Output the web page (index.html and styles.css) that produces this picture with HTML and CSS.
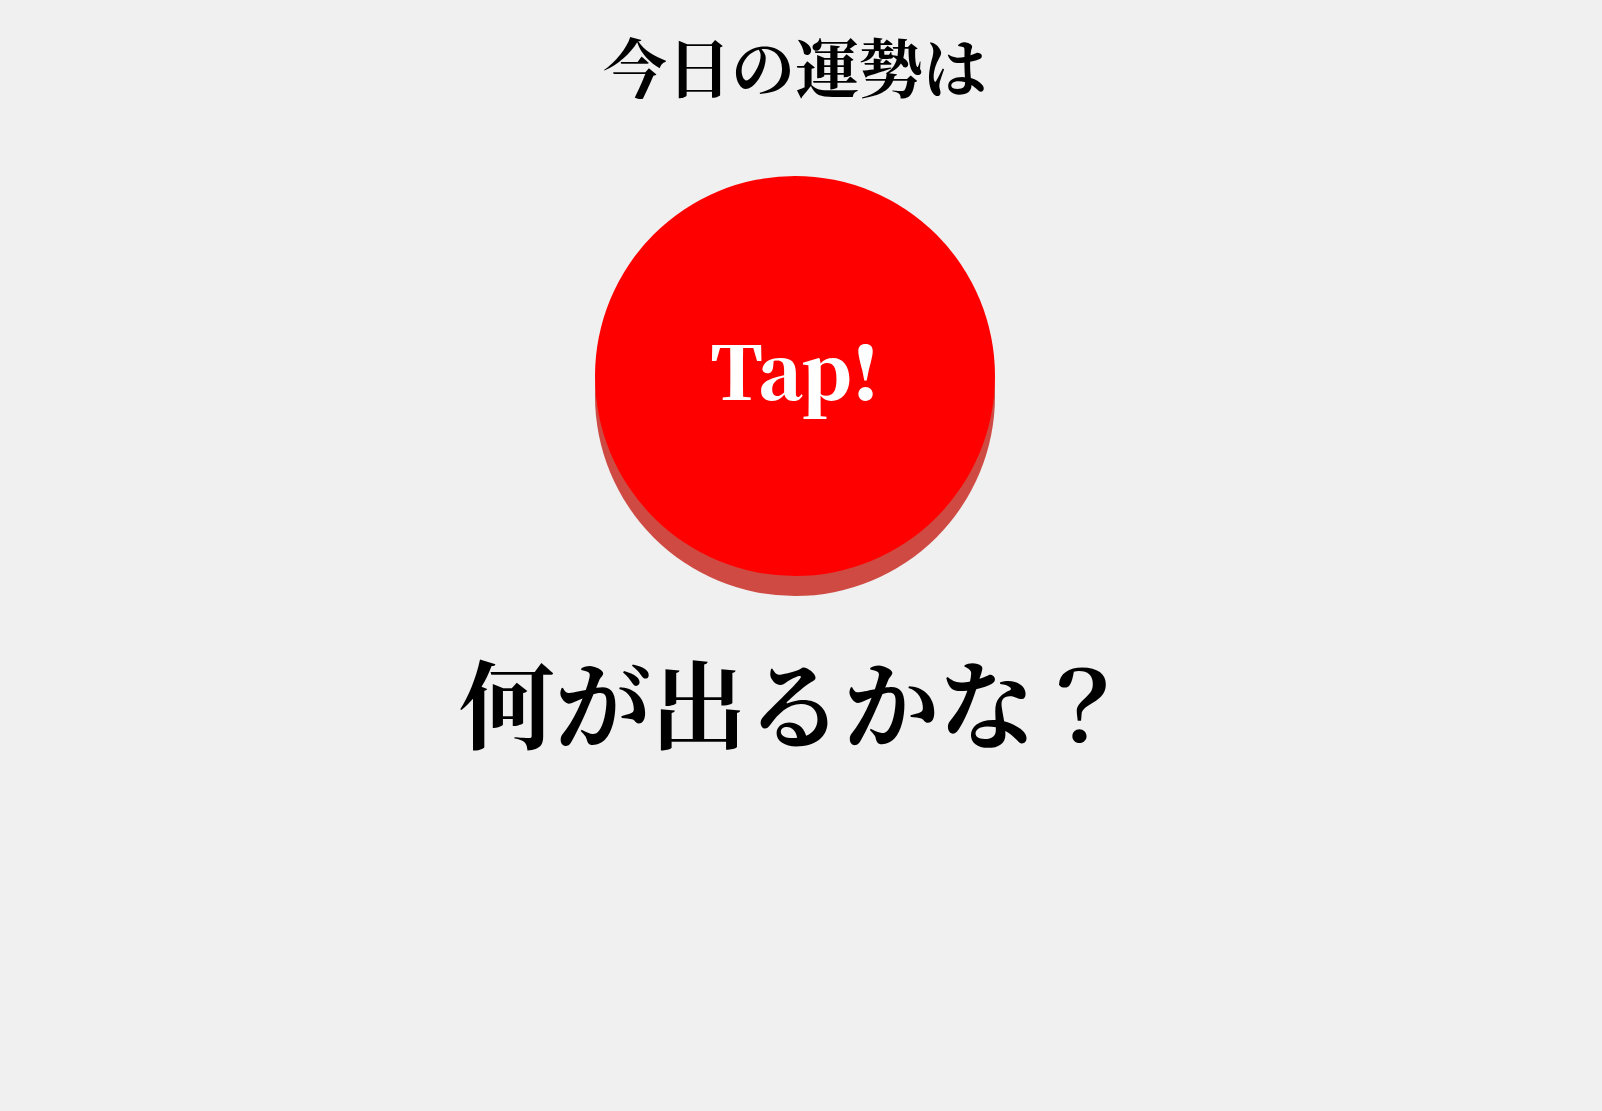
FILE: index.html
```html
<!DOCTYPE html>
<html lang="ja">
<head>
<meta charset="utf-8">
<link rel="stylesheet" href="styles.css">
</head>
<body>
<div class="page">
  <h1 class="title">今日の運勢は</h1>
  <div class="button"><span class="label">Tap!</span></div>
  <p class="result">何が出るかな？</p>
</div>
</body>
</html>
```
FILE: styles.css
```css
html, body {
  margin: 0;
  padding: 0;
  background: #f0f0f0;
}
body {
  font-family: "Noto Serif CJK JP", "Noto Serif JP", "IPAexMincho", "IPAMincho", "TakaoMincho", "Liberation Serif", serif;
}
.page {
  display: flex;
  flex-direction: column;
  align-items: center;
  padding-top: 20px;
  padding-right: 12px;
}
.title {
  font-size: 64px;
  font-weight: bold;
  margin: 0;
  line-height: 1.4;
}
.button {
  width: 400px;
  height: 400px;
  border-radius: 50%;
  background: #ff0000;
  box-shadow: 0 20px 0 #cf4a42;
  display: flex;
  align-items: center;
  justify-content: center;
  margin-top: 66px;
}
.label {
  color: #fff;
  font-size: 74px;
  font-weight: 900;
  line-height: 1;
  padding-bottom: 16px;
}
.result {
  font-size: 96px;
  font-weight: bold;
  margin: 57px 0 0;
  line-height: 1.4;
}
```
